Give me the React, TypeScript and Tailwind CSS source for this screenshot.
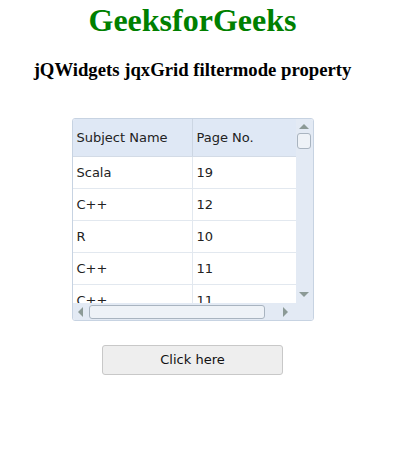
const rows = [
  { subject: "Scala", page: "19" },
  { subject: "C++", page: "12" },
  { subject: "R", page: "10" },
  { subject: "C++", page: "11" },
  { subject: "C++", page: "11" },
];

function Arrow({ dir }: { dir: "up" | "down" | "left" | "right" }) {
  const points = {
    up: "0,5 5,0 10,5",
    down: "0,0 10,0 5,5",
    left: "5,0 5,10 0,5",
    right: "0,0 0,10 5,5",
  }[dir];
  const vertical = dir === "up" || dir === "down";
  return (
    <svg
      width={vertical ? 10 : 5}
      height={vertical ? 5 : 10}
      viewBox={vertical ? "0 0 10 5" : "0 0 5 10"}
    >
      <polygon points={points} fill="#8c9a96" />
    </svg>
  );
}

export default function App() {
  return (
    <div className="w-[385px] bg-white text-black">
      <div className="flex flex-col items-center">
        <h1
          className="mt-[2px] text-[32px] leading-[37px] font-bold text-[#008000]"
          style={{ fontFamily: '"Liberation Serif", serif' }}
        >
          GeeksforGeeks
        </h1>
        <h3
          className="mt-[20px] text-[18.72px] leading-[22px] font-bold"
          style={{ fontFamily: '"Liberation Serif", serif' }}
        >
          jQWidgets jqxGrid filtermode property
        </h3>

        {/* Grid */}
        <div
          className="mt-[37px] flex h-[203px] w-[242px] flex-col overflow-hidden rounded-[3px] border border-[#c7d3e2] text-[13px] text-[#222]"
          style={{ fontFamily: '"DejaVu Sans", Verdana, sans-serif' }}
        >
          <div className="flex min-h-0 flex-1">
            <div className="flex min-w-0 flex-1 flex-col">
              <div className="flex h-[38px] shrink-0 border-b border-[#d3dbe6] bg-[#dfe8f5]">
                <div className="flex w-[120px] items-center border-r border-[#ccd6e3] pl-[4px]">
                  Subject Name
                </div>
                <div className="flex flex-1 items-center pl-[4px]">Page No.</div>
              </div>
              <div className="flex-1 overflow-hidden bg-white">
                {rows.map((r, i) => (
                  <div key={i} className="flex h-[32px] shrink-0 border-b border-[#e2e8ef]">
                    <div className="flex w-[120px] items-center border-r border-[#e2e8ef] pl-[4px]">
                      {r.subject}
                    </div>
                    <div className="flex flex-1 items-center pl-[4px]">{r.page}</div>
                  </div>
                ))}
              </div>
            </div>
            {/* vertical scrollbar */}
            <div className="flex w-[17px] flex-col items-center bg-[#e3eaf4]">
              <div className="mt-[5px]">
                <Arrow dir="up" />
              </div>
              <div className="mt-[4px] h-[16px] w-[14px] rounded-[3px] border border-[#a9b4c0] bg-[#eef2f7]" />
              <div className="flex-1" />
              <div className="mb-[6px]">
                <Arrow dir="down" />
              </div>
            </div>
          </div>
          {/* horizontal scrollbar */}
          <div className="flex h-[17px] shrink-0 items-center bg-[#e3eaf4]">
            <div className="ml-[5px]">
              <Arrow dir="left" />
            </div>
            <div className="ml-[6px] h-[14px] w-[176px] rounded-[3px] border border-[#a9b4c0] bg-[#eef2f7]" />
            <div className="ml-[18px]">
              <Arrow dir="right" />
            </div>
          </div>
        </div>

        <button
          className="mt-[24px] h-[30px] w-[181px] rounded-[3px] border border-[#c8c8c8] bg-[#eeeeee] text-[13px] text-[#111]"
          style={{ fontFamily: '"DejaVu Sans", Verdana, sans-serif' }}
        >
          Click here
        </button>
      </div>
    </div>
  );
}
